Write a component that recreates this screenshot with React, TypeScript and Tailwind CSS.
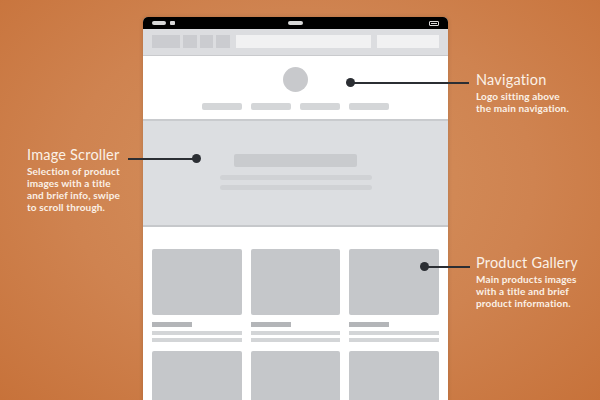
const navItems = [1, 2, 3, 4];
const products = [1, 2, 3, 4, 5, 6];

function Callout(props: { title: string; lines: string[] }) {
  return (
    <div className="text-[#fbf1e7]">
      <p className="text-[14.5px] leading-[16px] font-normal tracking-[0.2px]">{props.title}</p>
      <div className="mt-[2px] text-[10px] leading-[12px] font-bold tracking-[0.15px]">
        {props.lines.map((l, i) => (
          <p key={i}>{l}</p>
        ))}
      </div>
    </div>
  );
}

export default function App() {
  return (
    <div
      className="h-[400px] w-[600px] overflow-hidden grid grid-cols-[143px_305px_1fr] bg-[radial-gradient(ellipse_at_50%_45%,#d5925f_0%,#cf8350_55%,#c7723a_100%)]"
      style={{ fontFamily: "Lato, 'Noto Sans', sans-serif" }}
    >
      {/* left notes */}
      <div className="pt-[147px] pl-[27px]">
        <Callout
          title="Image Scroller"
          lines={["Selection of product", "images with a title", "and brief info, swipe", "to scroll through."]}
        />
      </div>

      {/* phone */}
      <div className="pt-[17px]">
        <div className="rounded-t-[5px] bg-white shadow-[0_0_4px_rgba(0,0,0,0.15)] h-[400px]">
          <div className="h-[12px] bg-black rounded-t-[5px] flex items-center px-[9px]">
            <div className="flex-1 flex items-center gap-[4px]">
              <div className="w-[14px] h-[4px] rounded-full bg-[#d8d8d8]" />
              <div className="w-[5px] h-[4px] rounded-[1px] bg-[#d8d8d8]" />
            </div>
            <div className="w-[15px] h-[4px] rounded-full bg-[#d8d8d8]" />
            <div className="flex-1 flex justify-end">
              <div className="w-[10px] h-[5px] rounded-[1px] border border-[#d8d8d8] p-[1px]">
                <div className="h-full w-full bg-[#d8d8d8]" />
              </div>
            </div>
          </div>

          <div className="h-[27px] bg-[#dcdde0] border-b border-[#c9cacd] flex gap-[3px] px-[9px] pt-[6px]">
            <div className="w-[28px] h-[13px] bg-[#cbccd0]" />
            <div className="w-[14px] h-[13px] bg-[#cbccd0]" />
            <div className="w-[13px] h-[13px] bg-[#cbccd0]" />
            <div className="w-[14px] h-[13px] bg-[#cbccd0]" />
            <div className="flex-1 h-[13px] bg-[#f1f1f2] ml-[3px]" />
            <div className="w-[62px] h-[13px] bg-[#f1f1f2] ml-[3px]" />
          </div>

          <div className="relative h-[65px] border-b-2 border-[#c9cbce] flex flex-col items-center pt-[11px]">
            <div className="w-[25px] h-[25px] rounded-full bg-[#c8c9cc]" />
            <div className="flex gap-[9px] mt-[11px]">
              {navItems.map((n) => (
                <div key={n} className="w-[40px] h-[7px] rounded-[2px] bg-[#d4d6d8]" />
              ))}
            </div>
            <div className="absolute left-[206px] top-[25.5px] w-[120px] h-[2px] bg-[#2b2e33]" />
            <div className="absolute left-[202.5px] top-[22px] w-[9px] h-[9px] rounded-full bg-[#2b2e33]" />
          </div>

          <div className="relative h-[106px] bg-[#dcdee1] border-b-2 border-[#c6c8cb] flex flex-col items-center pt-[33px]">
            <div className="w-[123px] h-[13px] rounded-[2px] bg-[#c9cbce]" />
            <div className="w-[152px] h-[5px] rounded-full bg-[#d0d2d5] mt-[8px]" />
            <div className="w-[152px] h-[5px] rounded-full bg-[#d0d2d5] mt-[5px]" />
            <div className="absolute left-[-15px] top-[36.5px] w-[66px] h-[2px] bg-[#2b2e33]" />
            <div className="absolute left-[48.5px] top-[33px] w-[9px] h-[9px] rounded-full bg-[#2b2e33]" />
          </div>

          <div className="relative px-[9px] pt-[22px] grid grid-cols-3 gap-x-[9px] gap-y-[9px]">
            {products.map((p) => (
              <div key={p}>
                <div className="h-[66px] rounded-[2px] bg-[#c5c7ca]" />
                <div className="mt-[7px] w-[40px] h-[5px] bg-[#b3b5b8]" />
                <div className="mt-[4px] h-[4px] bg-[#d3d5d7]" />
                <div className="mt-[3px] h-[4px] bg-[#d3d5d7]" />
              </div>
            ))}
            <div className="absolute left-[281px] top-[38.5px] w-[46px] h-[2px] bg-[#2b2e33]" />
            <div className="absolute left-[276.5px] top-[35px] w-[9px] h-[9px] rounded-full bg-[#2b2e33]" />
          </div>
        </div>
      </div>

      {/* right notes */}
      <div className="pt-[72px] pl-[28px] flex flex-col">
        <Callout title="Navigation" lines={["Logo sitting above", "the main navigation."]} />
        <div className="mt-[141px]">
          <Callout
            title="Product Gallery"
            lines={["Main products images", "with a title and brief", "product information."]}
          />
        </div>
      </div>
    </div>
  );
}
